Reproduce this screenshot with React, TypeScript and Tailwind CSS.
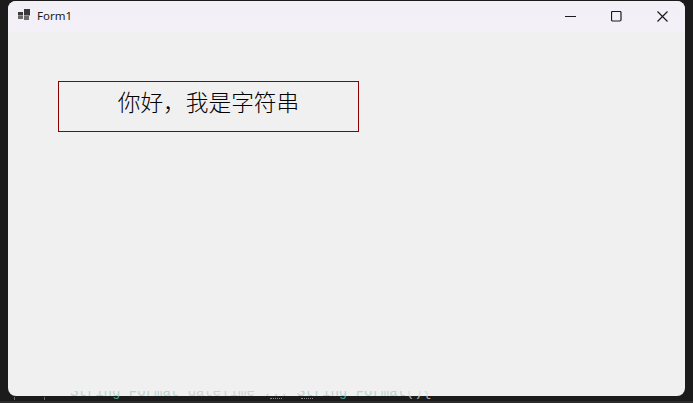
const codeFont = { fontFamily: '"Liberation Mono", monospace' };

function CodeLine() {
  return (
    <div className="text-[14px] leading-[16px] whitespace-pre text-[#3f9a86]" style={codeFont}>
      <span>String Format </span>
      <span className="text-[#8f8f8f]">dateTime ... </span>
      <span>String Format</span>
      <span className="text-[#b0b0b0]">(){'{'}</span>
    </div>
  );
}

export default function App() {
  return (
    <div className="relative h-[403px] w-[693px] overflow-hidden bg-[#1b1b1b] pt-px pl-2 font-['Noto_Sans','Noto_Sans_CJK_SC',sans-serif]">
      {/* editor behind the window, only the bottom of one line shows */}
      <div className="absolute top-[384px] left-[70px]">
        <CodeLine />
      </div>
      <div className="absolute top-[397px] left-[14px] h-[3px] w-px bg-[#6a6a6a]" />
      <div className="absolute top-[397px] left-[44px] h-[3px] w-px bg-[#6a6a6a]" />
      <div className="absolute top-[398px] left-[270px] h-px w-[12px] border-t border-dotted border-[#8a8a8a]" />
      <div className="absolute top-[398px] left-[301px] h-px w-[12px] border-t border-dotted border-[#8a8a8a]" />
      <div className="absolute top-[401px] left-0 h-[2px] w-full bg-[#2b2b2b]" />
      <div className="relative flex h-[395px] w-[677px] flex-col overflow-hidden rounded-lg bg-[#f0f0f0]">
        <div className="flex h-[31px] items-center bg-gradient-to-b from-[#f2eff6] to-[#f3f1f7] pl-[10px]">
          <svg width="13" height="12" viewBox="0 0 13 12" className="mb-[3px]" fill="#3a3a3a">
            <rect x="0" y="3" width="5" height="3.5" />
            <rect x="0" y="7" width="5" height="3" fill="#6a6a6a" />
            <rect x="6" y="0" width="6" height="6.5" />
            <rect x="6" y="7" width="5" height="4" fill="#6a6a6a" />
          </svg>
          <span className="mb-[2px] ml-[6px] text-[11.5px] text-[#1a1a1a]">Form1</span>
          <div className="ml-auto flex items-center text-[#1a1a1a]">
            <div className="flex h-[31px] w-[46px] items-center justify-center">
              <svg width="11" height="11" viewBox="0 0 11 11" stroke="currentColor" strokeWidth="1.2" fill="none">
                <path d="M0 5.5H11" />
              </svg>
            </div>
            <div className="flex h-[31px] w-[46px] items-center justify-center">
              <svg width="11" height="11" viewBox="0 0 11 11" stroke="currentColor" strokeWidth="1.2" fill="none">
                <rect x="0.5" y="0.5" width="9.5" height="9.5" rx="1.2" />
              </svg>
            </div>
            <div className="flex h-[31px] w-[46px] items-center justify-center">
              <svg width="11" height="11" viewBox="0 0 11 11" stroke="currentColor" strokeWidth="1.2" fill="none">
                <path d="M0.5 0.5L10.5 10.5M10.5 0.5L0.5 10.5" />
              </svg>
            </div>
          </div>
        </div>
        <div className="flex-1 pt-[49px] pl-[50px]">
          <div className="flex h-[51px] w-[301px] items-center justify-center border border-[#8b0000] pb-[6px] text-[22.7px] font-light text-black">
            你好，我是字符串
          </div>
        </div>
      </div>
      {/* the line shows faintly through the window's lower edge */}
      <div className="absolute top-[391px] left-[70px] h-[5px] overflow-hidden opacity-30">
        <div className="-mt-[7px]">
          <CodeLine />
        </div>
      </div>
    </div>
  );
}
